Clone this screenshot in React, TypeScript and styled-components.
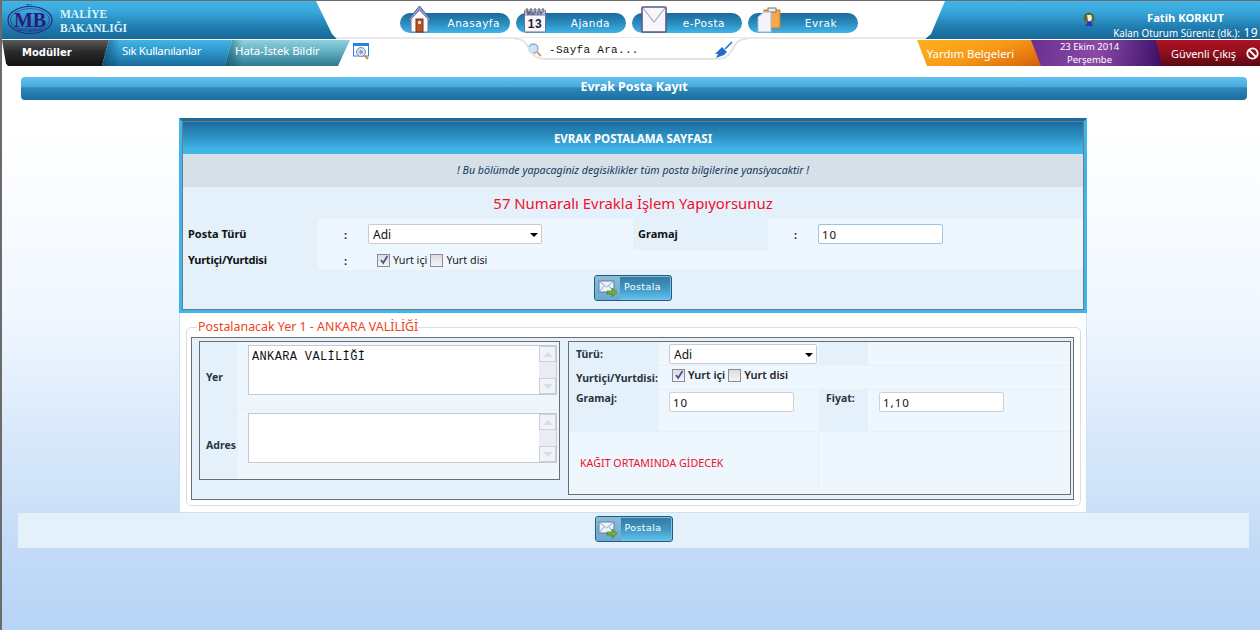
import React from 'react'
import styled, { createGlobalStyle } from 'styled-components'

const tahoma = '"Noto Sans", "Open Sans", sans-serif'
const verdana = '"DejaVu Sans", sans-serif'
const mono = '"Liberation Mono", monospace'

const blueDown = 'linear-gradient(#40b5e8 0%, #3aa9dc 25%, #1f7cae 70%, #166796 100%)'
const blueUp = 'linear-gradient(#1a6a9c 0%, #2a8bbd 50%, #40b5e8 100%)'

const GlobalStyle = createGlobalStyle`
  html, body { margin: 0; padding: 0; height: 100%; }
  body {
    background: linear-gradient(#ffffff 0%, #ffffff 20%, #f0f7ff 50%, #c3dbf7 87%, #b6d4f6 100%);
    font-family: ${tahoma};
    overflow: hidden;
  }
`

const Page = styled.div`
  box-sizing: border-box;
  width: 1260px;
  height: 630px;
  border-top: 1px solid #6b6b6b;
  border-left: 2px solid #6b6b6b;
  display: flex;
  flex-direction: column;
`

const Header = styled.header`
  display: flex;
  height: 38px;
`

const HeaderLeft = styled.div`
  width: 335px;
  flex-shrink: 0;
  background: ${blueDown};
  clip-path: polygon(0 0, 314px 0, 330px 33px, 335px 38px, 0 38px);
  display: flex;
  align-items: center;
  gap: 6px;
  padding-left: 4px;
  box-sizing: border-box;
`

const Brand = styled.div`
  font-family: "Liberation Serif", serif;
  font-weight: 700;
  font-size: 11.5px;
  line-height: 14px;
  color: #d9f1fb;
  margin-top: 1px;
`

const HeaderCenter = styled.nav`
  flex: 1;
  display: flex;
  gap: 6px;
  align-items: flex-start;
  padding: 12px 0 0 63px;
  box-sizing: border-box;
  border-bottom: 2px solid #e9e9e9;
`

const Pill = styled.a<{ $pad: number }>`
  position: relative;
  width: 110px;
  height: 20px;
  border-radius: 10px;
  background: ${blueUp};
  color: #fff;
  font-family: ${verdana};
  font-size: 10.5px;
  letter-spacing: 0.5px;
  line-height: 20px;
  text-align: right;
  box-sizing: border-box;
  padding-right: ${({ $pad }) => $pad}px;
`

const PillIcon = styled.svg<{ $left: number }>`
  position: absolute;
  left: ${({ $left }) => $left}px;
  bottom: 0;
`

const HeaderRight = styled.div`
  width: 335px;
  flex-shrink: 0;
  background: ${blueDown};
  clip-path: polygon(20px 0, 335px 0, 335px 38px, 0 38px, 6px 33px);
  display: flex;
  color: #fff;
  box-sizing: border-box;
`

const UserIcon = styled.svg`
  margin: 11px 0 0 158px;
  flex-shrink: 0;
`

const UserText = styled.div`
  flex: 1;
  text-align: right;
  padding-right: 2px;
`

const UserName = styled.div`
  font-size: 11.2px;
  font-weight: 700;
  line-height: 14px;
  margin: 10px 34px 0 0;
`

const Session = styled.div`
  font-size: 9.85px;
  line-height: 14px;
  margin-top: 1px;
  white-space: nowrap;
  & b { font-weight: 400; font-size: 12px; letter-spacing: 0.4px; margin-left: 1px; }
`

const NavRow = styled.div`
  display: flex;
  height: 27px;
  margin-top: 1px;
`

const TabGroup = styled.div`
  display: flex;
  width: 367px;
  flex-shrink: 0;
  align-items: flex-start;
`

const Tab = styled.a<{ $w: number; $bg: string; $lean: number; $rlean: number; $pad: number; $ls: number }>`
  width: ${({ $w }) => $w}px;
  height: 26px;
  flex-shrink: 0;
  margin-left: -7px;
  padding-left: ${({ $pad }) => $pad}px;
  box-sizing: border-box;
  background: ${({ $bg }) => $bg};
  clip-path: polygon(${({ $lean }) => $lean}px 0, 100% 0, calc(100% - ${({ $rlean }) => $rlean}px) 100%, 0 100%);
  color: #fff;
  font-size: 11.5px;
  letter-spacing: ${({ $ls }) => $ls}px;
  line-height: 22px;
  white-space: nowrap;
`

const ModulesTab = styled.a`
  width: 107px;
  height: 26px;
  flex-shrink: 0;
  padding-left: 20px;
  box-sizing: border-box;
  background: linear-gradient(#5a5a5a, #2b2b2b 45%, #121212);
  clip-path: polygon(0 0, 100% 0, calc(100% - 7px) 100%, 6px 100%, 4px 90%);
  color: #fff;
  font-family: ${verdana};
  font-weight: 700;
  font-size: 10px;
  line-height: 26px;
`

const WindowIcon = styled.svg`
  margin: 3px 0 0 3px;
  flex-shrink: 0;
`

const Search = styled.div`
  position: relative;
  width: 232px;
  height: 22px;
  margin: -2px 0 0 146px;
  flex-shrink: 0;
  display: flex;
  align-items: center;
  padding: 1px 14px 0 13px;
  box-sizing: border-box;
  font-family: ${mono};
  font-size: 11px;
  letter-spacing: 0.3px;
  color: #111;
  background: #fff;
`

const SearchEdge = styled.svg`
  position: absolute;
  left: 0;
  top: 0;
`

const SearchText = styled.span`
  margin-left: 7px;
  flex: 1;
`

const RightTabs = styled.div`
  display: flex;
  margin-left: auto;
  align-items: flex-start;
`

const RightTab = styled.a<{ $w: number; $bg: string; $over: number; $lean: number; $right?: number }>`
  width: ${({ $w }) => $w}px;
  height: 26px;
  margin-left: ${({ $over }) => -$over}px;
  padding-right: ${({ $right }) => $right ?? 0}px;
  background: ${({ $bg }) => $bg};
  clip-path: polygon(0 0, 100% 0, 100% 100%, ${({ $lean }) => $lean}px 100%);
  color: #fff;
  display: flex;
  align-items: center;
  justify-content: center;
  text-align: center;
  flex-shrink: 0;
  font-size: 11.4px;
  box-sizing: border-box;
  white-space: nowrap;
`

const DateTab = styled(RightTab)`
  font-size: 9.5px;
  line-height: 13px;
`

const ExitTab = styled(RightTab)`
  font-size: 10.9px;
  justify-content: flex-start;
  padding-left: 15px;
  gap: 10px;
`

const TitleBar = styled.h1`
  margin: 10px 13px 0 19px;
  height: 23px;
  border-radius: 4px;
  background: linear-gradient(#62c2ee 0%, #4aa9da 44%, #2e8abb 46%, #1a6c9e 100%);
  color: #fff;
  font-size: 12.4px;
  font-weight: 700;
  line-height: 20px;
  text-align: center;
  flex-shrink: 0;
`

const Sheet = styled.section`
  width: 908px;
  margin: 18px 0 0 177px;
  flex-shrink: 0;
`

const Panel = styled.div`
  border: 3px solid #3fb6ea;
  border-top-color: #1a6c9e;
  background: #3fb6ea;
`

const PanelInner = styled.div`
  border: 1px solid #6d7d88;
  background: #e4f1fb;
`

const PanelHead = styled.div`
  height: 32px;
  background: linear-gradient(#1c6c9e 0%, #2d8fc2 45%, #40b5e8 85%);
  color: #fff;
  font-size: 11.5px;
  font-weight: 700;
  line-height: 33px;
  text-align: center;
`

const Note = styled.div`
  height: 33px;
  background: #d5e0e9;
  color: #14365c;
  font-size: 10.65px;
  font-style: italic;
  line-height: 33px;
  text-align: center;
`

const Heading = styled.div`
  height: 31px;
  color: #f0102a;
  font-size: 14.9px;
  line-height: 32px;
  text-align: center;
`

const FormGrid = styled.div`
  display: grid;
  grid-template-columns: 135px 315px 135px 1fr;
  grid-template-rows: 32px 20px;
`

const Label = styled.div<{ $tight?: boolean }>`
  font-size: 11px;
  font-weight: 700;
  color: #111;
  padding: 0 0 ${({ $tight }) => ($tight ? 2 : 1)}px 5px;
  box-sizing: border-box;
  letter-spacing: ${({ $tight }) => ($tight ? -0.25 : 0)}px;
  display: flex;
  align-items: center;
  white-space: nowrap;
  background: #e4f1fb;
`

const Cell = styled.div<{ $span?: number }>`
  background: #eef6fe;
  display: flex;
  align-items: center;
  grid-column: span ${({ $span }) => $span ?? 1};
`

const Colon = styled.span`
  width: 50px;
  padding-left: 26px;
  box-sizing: border-box;
  font-size: 11px;
  font-weight: 700;
  color: #223;
`

const SelectWrap = styled.div<{ $w: number }>`
  position: relative;
  width: ${({ $w }) => $w}px;
  height: 20px;
  &::after {
    content: '';
    position: absolute;
    right: 4px;
    top: 9px;
    border-left: 4px solid transparent;
    border-right: 4px solid transparent;
    border-top: 4px solid #000;
  }
`

const Select = styled.select`
  appearance: none;
  display: block;
  width: 100%;
  height: 100%;
  box-sizing: border-box;
  background: #fff;
  border: 1px solid #c9c9cf;
  border-radius: 2px;
  padding: 0 4px;
  font-family: ${tahoma};
  font-size: 12px;
  color: #111;
`

const TextInput = styled.input<{ $focus?: boolean }>`
  display: block;
  width: 125px;
  height: 20px;
  box-sizing: border-box;
  background: #fff;
  border: 1px solid ${({ $focus }) => ($focus ? '#9cc4e0' : '#d0d0d6')};
  border-radius: 2px;
  padding: 0 3px;
  font-family: ${tahoma};
  font-size: 11.5px;
  letter-spacing: 1px;
  color: #111;
  outline: none;
`

const CheckLine = styled.div<{ $left: number; $strong?: boolean }>`
  display: flex;
  align-items: center;
  gap: 3px;
  font-size: ${({ $strong }) => ($strong ? 11 : 10.8)}px;
  font-weight: ${({ $strong }) => ($strong ? 600 : 400)};
  color: #222;
  margin-left: ${({ $left }) => $left}px;
  line-height: 14px;
  white-space: nowrap;
`

const CheckBox = styled.span`
  width: 13px;
  height: 13px;
  box-sizing: border-box;
  border: 1px solid #8c8c92;
  background: linear-gradient(#dcdce0, #f4f4f6);
  display: inline-flex;
  align-items: center;
  justify-content: center;
  flex-shrink: 0;
`

const ButtonRow = styled.div<{ $h: number }>`
  display: flex;
  justify-content: center;
  padding-top: ${({ $h }) => $h}px;
`

const Spacer = styled.div`
  height: 8px;
`

const PostButton = styled.button`
  width: 78px;
  height: 26px;
  padding: 0;
  display: flex;
  border: 1px solid #1e5c86;
  border-radius: 3px;
  box-shadow: inset 0 0 0 1px #7fbfe2;
  background: linear-gradient(#35789f, #3f95c2 50%, #62c4ee);
  color: #fff;
  font-family: ${verdana};
  font-size: 9.5px;
  letter-spacing: 0.4px;
  overflow: hidden;
`

const ButtonIcon = styled.span`
  width: 25px;
  height: 100%;
  display: flex;
  align-items: center;
  justify-content: center;
  background: linear-gradient(#8fbcd8, #6aa9cf);
  flex-shrink: 0;
`

const ButtonText = styled.span`
  margin-left: 4px;
  line-height: 22px;
`

const WhiteBox = styled.div`
  background: #fff;
  border: solid #cfe0f2;
  border-width: 0 1px 1px;
  padding: 7px 5px 0 6px;
  height: 200px;
  box-sizing: border-box;
`

const Field = styled.fieldset`
  margin: 0;
  padding: 3px 6px 5px 4px;
  height: 186px;
  box-sizing: border-box;
  border: 1px solid #d6dfe8;
  border-radius: 5px;
`

const Legend = styled.legend`
  padding: 0 0 0 1px;
  margin-left: 6px;
  font-size: 12.4px;
  color: #f0441a;
  line-height: 14px;
`

const OuterBox = styled.div`
  border: 1px solid #6e6e6e;
  background: #e4f1fb;
  height: 163px;
  box-sizing: border-box;
  display: flex;
  align-items: flex-start;
  padding: 3px 0 0 7px;
`

const LeftBox = styled.div`
  width: 361px;
  height: 139px;
  box-sizing: border-box;
  border: 1px solid #6e6e6e;
  display: grid;
  grid-template-columns: 38px 1fr;
  grid-template-rows: 67px 1fr;
  row-gap: 1px;
  flex-shrink: 0;
`

const SideLabel = styled.div`
  font-size: 10.5px;
  font-weight: 700;
  color: #2a3440;
  padding: 28px 0 0 6px;
  white-space: nowrap;
`

const AreaCell = styled.div`
  background: #eef6fe;
  padding: 3px 2px 0 10px;
`

const Area = styled.div`
  height: 50px;
  box-sizing: border-box;
  border: 1px solid #c6c9d0;
  background: #fff;
  display: flex;
`

const AreaText = styled.div`
  flex: 1;
  font-family: ${mono};
  font-size: 12px;
  letter-spacing: 0.35px;
  color: #111;
  padding: 4px 3px;
  line-height: 14px;
`

const Scroll = styled.div`
  width: 17px;
  background: #e9ecf0;
  display: flex;
  flex-direction: column;
  justify-content: space-between;
`

const ScrollBtn = styled.div<{ $down?: boolean }>`
  height: 16px;
  background: #f1f3f5;
  border: 1px solid #c3d3e4;
  box-sizing: border-box;
  display: flex;
  align-items: center;
  justify-content: center;
  &::after {
    content: '';
    border-left: 5px solid transparent;
    border-right: 5px solid transparent;
    ${({ $down }) => ($down ? 'border-top: 5px solid #d8dfe7;' : 'border-bottom: 5px solid #d8dfe7;')}
  }
`

const RightBox = styled.div`
  width: 503px;
  height: 154px;
  margin-left: 8px;
  box-sizing: border-box;
  border: 1px solid #6e6e6e;
  display: grid;
  grid-template-columns: 89px 161px 49px 1fr;
  grid-template-rows: 23px 23px 41px 1fr;
  row-gap: 1px;
  flex-shrink: 0;
`

const RightLabel = styled.div<{ $top?: number }>`
  font-size: 10.5px;
  font-weight: 700;
  color: #2a3440;
  padding: ${({ $top }) => $top ?? 5}px 0 0 7px;
  white-space: nowrap;
`

const RightCell = styled.div<{ $span?: number; $tint?: boolean }>`
  background: ${({ $tint }) => ($tint ? '#e4f1fb' : '#eef6fe')};
  grid-column: span ${({ $span }) => $span ?? 1};
  padding: 2px 0 0 11px;
  display: flex;
  align-items: flex-start;
`

const NoteCell = styled.div`
  background: #eef6fe;
  grid-column: span 2;
  color: #f0102a;
  font-size: 10.7px;
  padding: 24px 0 0 11px;
  border-right: 1px solid #e4f1fb;
`

const EmptyCell = styled.div`
  background: #eef6fe;
  grid-column: span 2;
`

const FootBand = styled.div`
  margin: 0 11px 0 16px;
  height: 35px;
  background: #e4f1fb;
  flex-shrink: 0;
`

const MailIcon = () => (
  <svg width="20" height="18" viewBox="0 0 20 18">
    <rect x="1" y="2" width="15" height="11" fill="#eef4fb" stroke="#5a7da5" />
    <path d="M1 2l7.5 6L16 2M1 13l5-6M16 13l-5-6" fill="none" stroke="#8aa6c6" />
    <path d="M9 12h5V9l5 4.5-5 4.5v-3H9z" fill="#6fb03c" stroke="#3f7a1e" strokeWidth="0.7" />
  </svg>
)

const Check = ({ on }: { on?: boolean }) => (
  <CheckBox>
    {on && (
      <svg width="10" height="10" viewBox="0 0 10 10">
        <path d="M2 5l2.2 3L8.5 1" fill="none" stroke="#44588f" strokeWidth="1.8" />
      </svg>
    )}
  </CheckBox>
)

const AreaBox = ({ text }: { text?: string }) => (
  <Area>
    <AreaText>{text}</AreaText>
    <Scroll>
      <ScrollBtn />
      <ScrollBtn $down />
    </Scroll>
  </Area>
)

const Post = () => (
  <PostButton>
    <ButtonIcon>
      <MailIcon />
    </ButtonIcon>
    <ButtonText>Postala</ButtonText>
  </PostButton>
)

const App = () => (
  <Page>
    <GlobalStyle />
    <Header>
      <HeaderLeft>
        <svg width="48" height="34" viewBox="0 0 48 34">
          <ellipse cx="24" cy="17" rx="22" ry="13.5" fill="none" stroke="#2a2a86" strokeWidth="1.2" />
          <ellipse cx="24" cy="17" rx="19.5" ry="11.5" fill="none" stroke="#2a2a86" strokeWidth="0.6" />
          <text x="24" y="24" textAnchor="middle" fontFamily="Liberation Serif" fontWeight="700" fontSize="20" fill="#2a1a7c">MB</text>
          <text x="24" y="4" textAnchor="middle" fontFamily="Liberation Sans" fontWeight="700" fontSize="4" fill="#2a2a86">T.C.</text>
          <text x="24" y="28" textAnchor="middle" fontFamily="Liberation Sans" fontSize="2.6" fill="#2a2a86">MALİYE BAKANLIĞI</text>
        </svg>
        <Brand>MALİYE<br />BAKANLIĞI</Brand>
      </HeaderLeft>
      <HeaderCenter>
        <Pill $pad={10}>
          <PillIcon $left={7} width="25" height="28" viewBox="0 0 25 28">
            <path d="M1 15L12.500 1 24 15l-2 1L12.500 5 3 16z" fill="#8f9fc9" stroke="#4c5a94" />
            <path d="M4 14l8.500-9L21 14v13H4z" fill="#fbfbfb" stroke="#6f79a6" />
            <rect x="9" y="14" width="7" height="13" fill="#b2542a" stroke="#7a3215" />
            <rect x="11" y="16" width="3" height="3" fill="#f3d7a8" />
          </PillIcon>
          Anasayfa
        </Pill>
        <Pill $pad={16}>
          <PillIcon $left={7} width="24" height="26" viewBox="0 0 24 26">
            <rect x="1.500" y="3" width="21" height="22" rx="1" fill="#f8f8fb" stroke="#6d7199" />
            <rect x="2" y="3" width="20" height="6" fill="#b3b6da" />
            <path d="M4 1v4M8 1v4M12 1v4M16 1v4M20 1v4" stroke="#555" />
            <text x="12" y="8" textAnchor="middle" fontFamily="Liberation Sans" fontSize="4.500" fontWeight="700" fill="#333">March</text>
            <text x="12" y="21" textAnchor="middle" fontFamily="Liberation Sans" fontSize="12" fontWeight="700" fill="#1c2233">13</text>
          </PillIcon>
          Ajanda
        </Pill>
        <Pill $pad={17}>
          <PillIcon $left={9} width="26" height="27" viewBox="0 0 26 27">
            <rect x="1" y="1" width="24" height="25" rx="1" fill="#f7f7fb" stroke="#5d5a80" strokeWidth="1.6" />
            <path d="M2 2l11 14L24 2" fill="none" stroke="#a6a8c4" strokeWidth="1.2" />
          </PillIcon>
          e-Posta
        </Pill>
        <Pill $pad={21}>
          <PillIcon $left={9} width="24" height="26" viewBox="0 0 24 26">
            <rect x="7" y="3" width="16" height="18" fill="#f4a94a" stroke="#c77f25" />
            <rect x="11" y="1" width="8" height="4" fill="#ededed" stroke="#777" />
            <path d="M1 10l6-5h7v20H1z" fill="#f2f6fc" stroke="#a9bad2" />
          </PillIcon>
          Evrak
        </Pill>
      </HeaderCenter>
      <HeaderRight>
        <UserIcon width="12" height="15" viewBox="0 0 12 15">
          <circle cx="6" cy="6" r="5.500" fill="#5b6b36" />
          <path d="M4 3h4l1 3-1 3H5z" fill="#f2edd6" />
          <path d="M2 14l3-4h3l2 4z" fill="#2433c9" />
        </UserIcon>
        <UserText>
          <UserName>Fatih KORKUT</UserName>
          <Session>Kalan Oturum Süreniz (dk.): <b>19</b></Session>
        </UserText>
      </HeaderRight>
    </Header>
    <NavRow>
      <TabGroup>
        <ModulesTab>Modüller</ModulesTab>
        <Tab $w={130} $lean={7} $rlean={7} $pad={20} $ls={-0.4} $bg="linear-gradient(90deg, rgba(10, 70, 110, 0.75), transparent 14%), linear-gradient(#40b5e8, #2f96cb 45%, #176a9a)">Sık Kullanılanlar</Tab>
        <Tab $w={125} $lean={7} $rlean={12} $pad={10} $ls={-0.12} $bg="linear-gradient(90deg, rgba(10, 80, 100, 0.7), transparent 14%), linear-gradient(#8dd2df 0%, #5eaabd 50%, #2b7a90 100%)">Hata-İstek Bildir</Tab>
        <WindowIcon width="17" height="18" viewBox="0 0 17 18">
          <rect x="0.500" y="1" width="15" height="12" fill="#fff" stroke="#2e7fe0" />
          <rect x="0" y="0" width="16" height="3" fill="#2e7fe0" />
          <circle cx="8" cy="9" r="4.500" fill="#cfdff0" stroke="#7a90ad" />
          <path d="M6 9h4M8 7v4" stroke="#6a80a0" />
          <path d="M12 13l3 3" stroke="#c98a4a" strokeWidth="2" />
        </WindowIcon>
      </TabGroup>
      <Search>
        <SearchEdge width="232" height="24" viewBox="0 0 232 24">
          <path d="M0 1C6 1 9 2 12 7L17 15C20 20 24 21 30 21H202C208 21 212 20 215 15L220 7C223 2 226 1 232 1" fill="none" stroke="#e4e4e4" strokeWidth="2" />
        </SearchEdge>
        <svg width="14" height="14" viewBox="0 0 14 14">
          <circle cx="5.500" cy="5.500" r="4.500" fill="#cfe3f7" stroke="#7fa8d2" strokeWidth="1.300" />
          <path d="M9 9l4 4" stroke="#d2a06a" strokeWidth="2" />
        </svg>
        <SearchText>-Sayfa Ara...</SearchText>
        <svg width="18" height="18" viewBox="0 0 18 18">
          <path d="M17 1l-7 7" stroke="#2472c8" strokeWidth="1.600" />
          <path d="M7 6l5 5-3 3-8 3 2-4-3 0z" fill="#1f6fcb" />
        </svg>
      </Search>
      <RightTabs>
        <RightTab $w={125} $over={0} $lean={10} $right={18} $bg="linear-gradient(160deg, #ffb11f 0%, #f79a18 50%, #e0720f 85%, #cf5c0e 100%)">Yardım Belgeleri</RightTab>
        <DateTab $w={131} $over={11} $lean={10} $right={14} $bg="linear-gradient(100deg, #6a2f90 0%, #8a4aa6 50%, #3a0f66 100%)"><span>23 Ekim 2014<br />Perşembe</span></DateTab>
        <ExitTab $w={104} $over={6} $lean={6} $bg="linear-gradient(#b01224 0%, #8d0f1c 50%, #5b0810 100%)">
          Güvenli Çıkış
          <svg width="13" height="13" viewBox="0 0 13 13">
            <circle cx="6.500" cy="6.500" r="5.200" fill="none" stroke="#fff" strokeWidth="1.800" />
            <path d="M3 3l7 7" stroke="#fff" strokeWidth="1.800" />
          </svg>
        </ExitTab>
      </RightTabs>
    </NavRow>
    <TitleBar>Evrak Posta Kayıt</TitleBar>
    <Sheet>
      <Panel>
        <PanelInner>
          <PanelHead>EVRAK POSTALAMA SAYFASI</PanelHead>
          <Note>! Bu bölümde yapacaginiz degisiklikler tüm posta bilgilerine yansiyacaktir !</Note>
          <Heading>57 Numaralı Evrakla İşlem Yapıyorsunuz</Heading>
          <FormGrid>
            <Label>Posta Türü</Label>
            <Cell>
              <Colon>:</Colon>
              <SelectWrap $w={174}>
                <Select defaultValue="Adi"><option>Adi</option></Select>
              </SelectWrap>
            </Cell>
            <Label>Gramaj</Label>
            <Cell>
              <Colon>:</Colon>
              <TextInput $focus readOnly value="10" />
            </Cell>
            <Label $tight>Yurtiçi/Yurtdisi</Label>
            <Cell $span={3}>
              <Colon>:</Colon>
              <CheckLine $left={9}>
                <Check on />Yurt içi<Check />Yurt disi
              </CheckLine>
            </Cell>
          </FormGrid>
          <ButtonRow $h={5}><Post /></ButtonRow>
          <Spacer />
        </PanelInner>
      </Panel>
      <WhiteBox>
        <Field>
          <Legend>Postalanacak Yer 1 - ANKARA VALİLİĞİ</Legend>
          <OuterBox>
            <LeftBox>
              <SideLabel>Yer</SideLabel>
              <AreaCell><AreaBox text="ANKARA VALİLİĞİ" /></AreaCell>
              <SideLabel>Adres</SideLabel>
              <AreaCell><AreaBox /></AreaCell>
            </LeftBox>
            <RightBox>
              <RightLabel>Türü:</RightLabel>
              <RightCell>
                <SelectWrap $w={148}>
                  <Select defaultValue="Adi"><option>Adi</option></Select>
                </SelectWrap>
              </RightCell>
              <RightCell $tint />
              <RightCell />
              <RightLabel>Yurtiçi/Yurtdisi:</RightLabel>
              <RightCell $span={3}>
                <CheckLine $left={3} $strong>
                  <Check on />Yurt içi<Check />Yurt disi
                </CheckLine>
              </RightCell>
              <RightLabel $top={1}>Gramaj:</RightLabel>
              <RightCell><TextInput readOnly value="10" /></RightCell>
              <RightLabel $top={1}>Fiyat:</RightLabel>
              <RightCell><TextInput readOnly value="1,10" /></RightCell>
              <NoteCell>KAĞIT ORTAMINDA GİDECEK</NoteCell>
              <EmptyCell />
            </RightBox>
          </OuterBox>
        </Field>
      </WhiteBox>
    </Sheet>
    <FootBand>
      <ButtonRow $h={3}><Post /></ButtonRow>
    </FootBand>
  </Page>
)

export default App
